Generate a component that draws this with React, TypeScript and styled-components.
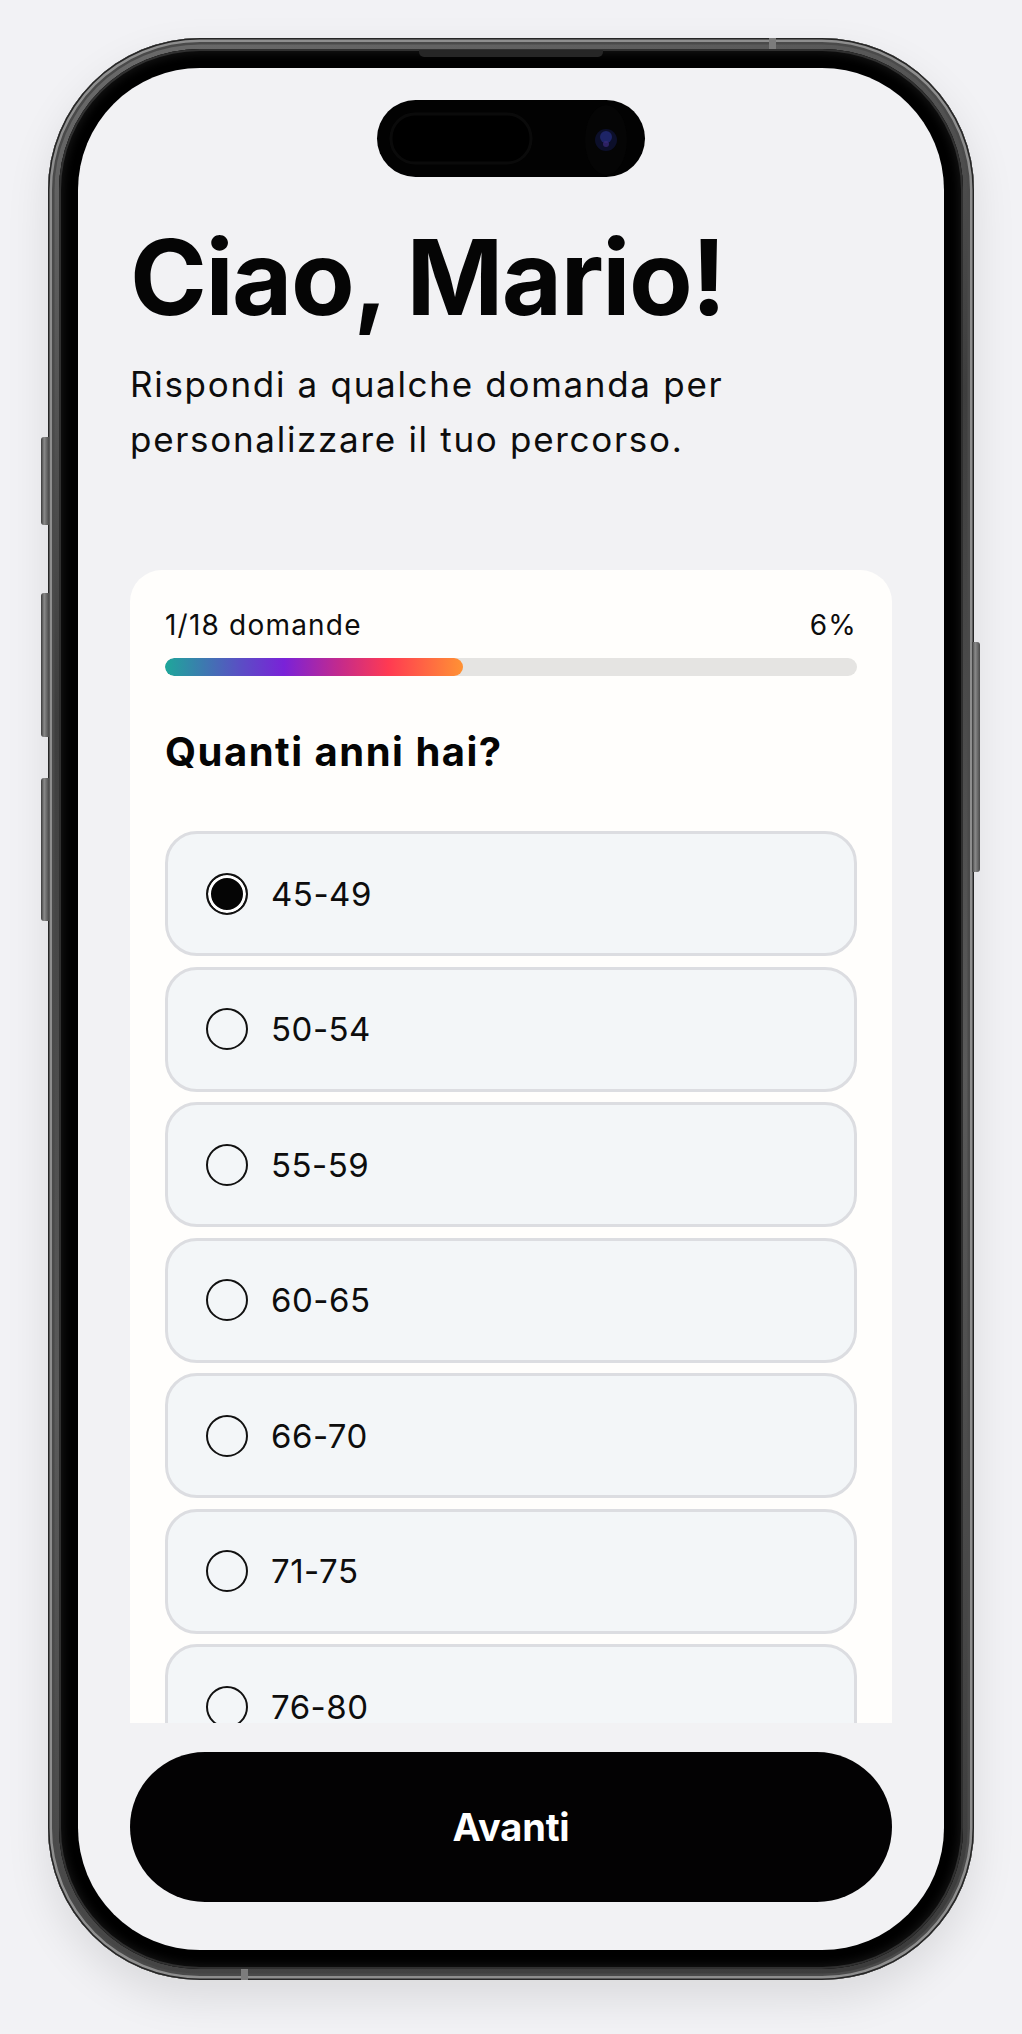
import React from 'react'
import styled, { createGlobalStyle } from 'styled-components'

const GlobalStyle = createGlobalStyle`
  html, body {
    margin: 0;
    padding: 0;
    background: #f2f2f5;
  }
  body {
    font-family: Inter, 'Noto Sans', 'Liberation Sans', sans-serif;
    color: #0b0b0b;
    -webkit-font-smoothing: antialiased;
  }
  * {
    box-sizing: border-box;
  }
`

const Page = styled.div`
  width: 1022px;
  height: 2034px;
  padding-top: 38px;
  display: flex;
  justify-content: center;
  align-items: flex-start;
  background: #f2f2f5;
  overflow: hidden;
`

const Frame = styled.div`
  position: relative;
  width: 926px;
  height: 1942px;
  padding: 11px;
  border-radius: 152px;
  background: linear-gradient(160deg, #6c6c6c 0%, #3e3e3e 30%, #5a5a5a 60%, #3a3a3a 100%);
  box-shadow:
    0 18px 44px rgba(0, 0, 0, 0.1),
    inset 0 0 0 1.5px #262626,
    inset 0 0 0 4px #8e8e8e,
    inset 0 0 0 6.5px #4a4a4a;
`

// hardware bits sit on the edge of the frame
const SideButton = styled.div<{ $side: 'left' | 'right'; $top: number; $height: number }>`
  position: absolute;
  ${(p) => (p.$side === 'left' ? 'left: -7px;' : 'right: -6px;')}
  top: ${(p) => p.$top}px;
  width: 8px;
  height: ${(p) => p.$height}px;
  border-radius: ${(p) => (p.$side === 'left' ? '3px 0 0 3px' : '0 3px 3px 0')};
  background: linear-gradient(90deg, #3a3a3a, #8a8a8a 40%, #4a4a4a);
`

const Speaker = styled.div`
  position: absolute;
  top: 12px;
  left: 50%;
  width: 184px;
  height: 7px;
  transform: translateX(-50%);
  border-radius: 0 0 5px 5px;
  background: #262626;
  z-index: 2;
`

const AntennaLine = styled.div<{ $left: number; $bottom?: boolean }>`
  position: absolute;
  left: ${(p) => p.$left}px;
  ${(p) => (p.$bottom ? 'bottom: 0;' : 'top: 0;')}
  width: 7px;
  height: 11px;
  background: #7c7c7c;
`

const Bezel = styled.div`
  height: 100%;
  padding: 19px;
  border-radius: 141px;
  background: #000;
  box-shadow: inset 0 0 0 2px #303030, inset 0 0 10px 4px #151515;
`

const Screen = styled.div`
  position: relative;
  height: 100%;
  border-radius: 122px;
  background: #f2f2f4;
  overflow: hidden;
  display: flex;
  flex-direction: column;
`

const Island = styled.div`
  position: absolute;
  top: 32px;
  left: 50%;
  width: 268px;
  height: 77px;
  transform: translateX(-50%);
  border-radius: 39px;
  background: #020202;
  z-index: 3;
  svg {
    display: block;
  }
`

const Content = styled.div`
  flex: 1;
  min-height: 0;
  overflow: hidden;
  padding: 152px 52px 0;
`

const Title = styled.h1`
  margin: 0;
  font-size: 104px;
  line-height: 114px;
  font-weight: 700;
  letter-spacing: -1.5px;
  color: #050505;
`

const Subtitle = styled.p`
  margin: 23px 0 0;
  font-size: 35px;
  line-height: 55px;
  font-weight: 400;
  letter-spacing: 1.7px;
  color: #0d0d0d;
`

const Card = styled.section`
  margin-top: 103px;
  padding: 38px 35px 40px;
  border-radius: 32px;
  background: #fffefc;
`

const ProgressHead = styled.div`
  display: flex;
  justify-content: space-between;
  font-size: 28px;
  line-height: 34px;
  letter-spacing: 1.2px;
  color: #0d0d0d;
`

const Track = styled.div`
  margin-top: 16px;
  height: 18px;
  border-radius: 9px;
  background: #e5e4e2;
  overflow: hidden;
`

const Fill = styled.div`
  height: 100%;
  border-radius: 9px;
  background: linear-gradient(90deg, #1ea79a 0%, #5a4fc4 25%, #7a22d8 40%, #c22a8e 58%, #ff3a52 75%, #ff9234 100%);
`

const Question = styled.h2`
  margin: 52px 0 0;
  font-size: 40px;
  line-height: 48px;
  font-weight: 700;
  letter-spacing: 1.5px;
  color: #050505;
`

const Options = styled.div`
  margin-top: 55px;
  display: flex;
  flex-direction: column;
  gap: 10.5px;
`

const Option = styled.label`
  display: flex;
  align-items: center;
  gap: 23px;
  height: 125px;
  flex-shrink: 0;
  padding-left: 38px;
  border: 3px solid #dcdde1;
  border-radius: 32px;
  background: #f3f6f8;
  font-size: 33px;
  letter-spacing: 0.5px;
  color: #0d0d0d;
`

const Radio = styled.span<{ $checked?: boolean }>`
  width: 42px;
  height: 42px;
  flex-shrink: 0;
  border-radius: 50%;
  border: 2px solid #111;
  background: ${(p) => (p.$checked ? '#050505' : 'transparent')};
  box-shadow: ${(p) => (p.$checked ? 'inset 0 0 0 3px #fff' : 'none')};
`

const Footer = styled.div`
  flex-shrink: 0;
  padding: 29px 52px 48px;
`

const NextButton = styled.button`
  display: block;
  width: 100%;
  height: 150px;
  border: none;
  border-radius: 75px;
  background: #030203;
  color: #fff;
  font-family: Inter, 'Noto Sans', sans-serif;
  font-size: 38px;
  font-weight: 700;
  letter-spacing: -0.2px;
`

const ages = ['45-49', '50-54', '55-59', '60-65', '66-70', '71-75', '76-80']

export default function App() {
  const progress = 43

  return (
    <>
      <GlobalStyle />
      <Page>
        <Frame>
          <SideButton $side="left" $top={399} $height={88} />
          <SideButton $side="left" $top={555} $height={144} />
          <SideButton $side="left" $top={740} $height={143} />
          <SideButton $side="right" $top={604} $height={230} />
          <Speaker />
          <AntennaLine $left={721} />
          <AntennaLine $left={193} $bottom />
          <Bezel>
            <Screen>
              <Island>
                <svg width="268" height="77" viewBox="0 0 268 77">
                  <rect x="14" y="14" width="140" height="49" rx="24" fill="#000" stroke="#0a0a0a" strokeWidth="3" />
                  <ellipse cx="229" cy="40" rx="21" ry="35" fill="#050505" />
                  <circle cx="229" cy="40" r="11" fill="#0c0f2a" />
                  <circle cx="229" cy="37" r="6" fill="#1d2466" />
                  <circle cx="229" cy="44" r="3" fill="#3b2a7a" opacity="0.7" />
                </svg>
              </Island>
              <Content>
                <Title>Ciao, Mario!</Title>
                <Subtitle>
                  Rispondi a qualche domanda per
                  <br />
                  personalizzare il tuo percorso.
                </Subtitle>
                <Card>
                  <ProgressHead>
                    <span>1/18 domande</span>
                    <span>6%</span>
                  </ProgressHead>
                  <Track>
                    <Fill style={{ width: `${progress}%` }} />
                  </Track>
                  <Question>Quanti anni hai?</Question>
                  <Options>
                    {ages.map((age, i) => (
                      <Option key={age}>
                        <Radio $checked={i === 0} />
                        {age}
                      </Option>
                    ))}
                  </Options>
                </Card>
              </Content>
              <Footer>
                <NextButton>Avanti</NextButton>
              </Footer>
            </Screen>
          </Bezel>
        </Frame>
      </Page>
    </>
  )
}
